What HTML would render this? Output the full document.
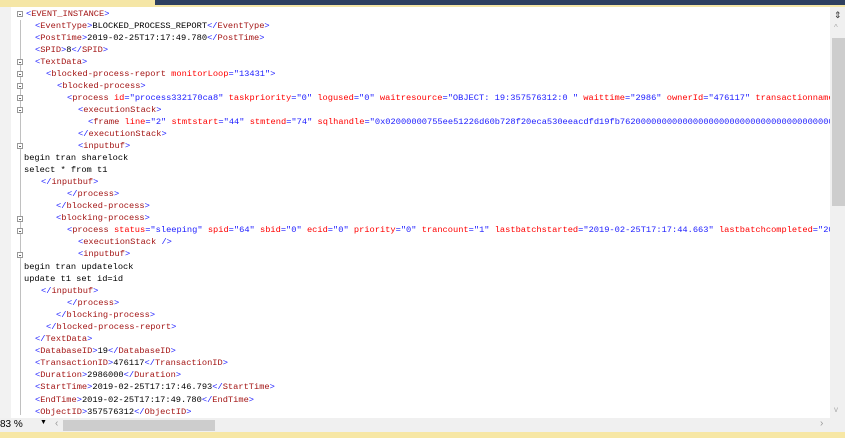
<!DOCTYPE html>
<html><head><style>
body{margin:0;width:845px;height:438px;overflow:hidden;background:#fff;position:relative;font-family:"Liberation Mono",monospace;}
#top{position:absolute;left:0;top:0;width:845px;height:7px;background:#f5e6a6;}
#nav{position:absolute;left:155px;top:0;width:690px;height:5px;background:#2e3f5f;}
#gut{position:absolute;left:0;top:7px;width:11px;height:411px;background:#f2f2f2;}
#fold{position:absolute;left:20px;top:20px;width:1px;height:395px;background:#c0c0c0;}
.l{position:absolute;font-size:8.7px;line-height:12px;white-space:pre;color:#000;}
.b{color:#2020ff}.t{color:#a31515}.a{color:#ff0000}.v{color:#2020ff}
.fm{position:absolute;left:17px;width:6px;height:6px;border:1px solid #999;background:#fff;box-sizing:border-box;}
.fm::after{content:"";position:absolute;left:1px;top:2px;width:2px;height:1px;background:#666}
#vs{position:absolute;left:830px;top:7px;width:15px;height:411px;background:#f0f0f0;}
#vt{position:absolute;left:832px;top:38px;width:13px;height:168px;background:#cdcdcd;}
#bot{position:absolute;left:0;top:418px;width:845px;height:14px;background:#f0f0f0;font-family:"Liberation Sans",sans-serif;font-size:10px;}
#ht{position:absolute;left:63px;top:420px;width:152px;height:11px;background:#cdcdcd;}
#yb{position:absolute;left:0;top:432px;width:845px;height:6px;background:#f7e7a5;}
#ed{position:absolute;left:0;top:7px;width:830px;height:411px;overflow:hidden;}
</style></head><body>
<div id="top"></div><div id="nav"></div>
<div id="gut"></div><div id="fold"></div>
<div id="vs"><div style="position:absolute;left:4px;top:3px;font-size:9px;color:#333;font-family:'Liberation Sans'">&#8661;</div><div style="position:absolute;left:4px;top:16px;font-size:8px;color:#aaa;font-family:'Liberation Sans'">^</div><div style="position:absolute;left:4px;top:398px;font-size:8px;color:#aaa;font-family:'Liberation Sans'">v</div></div>
<div id="vt"></div>
<div id="bot"><span style="position:absolute;left:0;top:1px">83 %</span><span style="position:absolute;left:40px;top:1px;font-size:7px">&#9660;</span><span style="position:absolute;left:55px;top:0;color:#999">&lsaquo;</span><span style="position:absolute;left:820px;top:0;color:#999">&rsaquo;</span></div>
<div id="ht"></div>
<div id="yb"></div>

<div class="fm" style="top:11px"></div>
<div class="fm" style="top:59px"></div>
<div class="fm" style="top:71px"></div>
<div class="fm" style="top:83px"></div>
<div class="fm" style="top:95px"></div>
<div class="fm" style="top:107px"></div>
<div class="fm" style="top:143px"></div>
<div class="fm" style="top:216px"></div>
<div class="fm" style="top:228px"></div>
<div class="fm" style="top:252px"></div>

<div id="ed"><div style="position:absolute;left:0;top:-7px;width:845px">
<div class="l" style="left:26px;top:8px"><span class="b">&lt;</span><span class="t">EVENT_INSTANCE</span><span class="b">&gt;</span></div>
<div class="l" style="left:35px;top:20px"><span class="b">&lt;</span><span class="t">EventType</span><span class="b">&gt;</span>BLOCKED_PROCESS_REPORT<span class="b">&lt;/</span><span class="t">EventType</span><span class="b">&gt;</span></div>
<div class="l" style="left:35px;top:32px"><span class="b">&lt;</span><span class="t">PostTime</span><span class="b">&gt;</span>2019-02-25T17:17:49.780<span class="b">&lt;/</span><span class="t">PostTime</span><span class="b">&gt;</span></div>
<div class="l" style="left:35px;top:44px"><span class="b">&lt;</span><span class="t">SPID</span><span class="b">&gt;</span>8<span class="b">&lt;/</span><span class="t">SPID</span><span class="b">&gt;</span></div>
<div class="l" style="left:35px;top:56px"><span class="b">&lt;</span><span class="t">TextData</span><span class="b">&gt;</span></div>
<div class="l" style="left:46px;top:68px"><span class="b">&lt;</span><span class="t">blocked-process-report</span> <span class="a">monitorLoop</span><span class="b">="</span><span class="v">13431</span><span class="b">"&gt;</span></div>
<div class="l" style="left:57px;top:80px"><span class="b">&lt;</span><span class="t">blocked-process</span><span class="b">&gt;</span></div>
<div class="l" style="left:67px;top:92px"><span class="b">&lt;</span><span class="t">process</span> <span class="a">id</span><span class="b">="</span><span class="v">process332170ca8</span><span class="b">"</span> <span class="a">taskpriority</span><span class="b">="</span><span class="v">0</span><span class="b">"</span> <span class="a">logused</span><span class="b">="</span><span class="v">0</span><span class="b">"</span> <span class="a">waitresource</span><span class="b">="</span><span class="v">OBJECT: 19:357576312:0 </span><span class="b">"</span> <span class="a">waittime</span><span class="b">="</span><span class="v">2986</span><span class="b">"</span> <span class="a">ownerId</span><span class="b">="</span><span class="v">476117</span><span class="b">"</span> <span class="a">transactionname</span></div>
<div class="l" style="left:78px;top:104px"><span class="b">&lt;</span><span class="t">executionStack</span><span class="b">&gt;</span></div>
<div class="l" style="left:88px;top:116px"><span class="b">&lt;</span><span class="t">frame</span> <span class="a">line</span><span class="b">="</span><span class="v">2</span><span class="b">"</span> <span class="a">stmtstart</span><span class="b">="</span><span class="v">44</span><span class="b">"</span> <span class="a">stmtend</span><span class="b">="</span><span class="v">74</span><span class="b">"</span> <span class="a">sqlhandle</span><span class="b">="</span><span class="v">0x02000000755ee51226d60b728f20eca530eeacdfd19fb76200000000000000000000000000000000000000000000</span></div>
<div class="l" style="left:78px;top:128px"><span class="b">&lt;/</span><span class="t">executionStack</span><span class="b">&gt;</span></div>
<div class="l" style="left:78px;top:140px"><span class="b">&lt;</span><span class="t">inputbuf</span><span class="b">&gt;</span></div>
<div class="l" style="left:24px;top:152px">begin tran sharelock</div>
<div class="l" style="left:24px;top:164px">select * from t1</div>
<div class="l" style="left:41px;top:176px"><span class="b">&lt;/</span><span class="t">inputbuf</span><span class="b">&gt;</span></div>
<div class="l" style="left:67px;top:188px"><span class="b">&lt;/</span><span class="t">process</span><span class="b">&gt;</span></div>
<div class="l" style="left:56px;top:200px"><span class="b">&lt;/</span><span class="t">blocked-process</span><span class="b">&gt;</span></div>
<div class="l" style="left:56px;top:212px"><span class="b">&lt;</span><span class="t">blocking-process</span><span class="b">&gt;</span></div>
<div class="l" style="left:67px;top:224px"><span class="b">&lt;</span><span class="t">process</span> <span class="a">status</span><span class="b">="</span><span class="v">sleeping</span><span class="b">"</span> <span class="a">spid</span><span class="b">="</span><span class="v">64</span><span class="b">"</span> <span class="a">sbid</span><span class="b">="</span><span class="v">0</span><span class="b">"</span> <span class="a">ecid</span><span class="b">="</span><span class="v">0</span><span class="b">"</span> <span class="a">priority</span><span class="b">="</span><span class="v">0</span><span class="b">"</span> <span class="a">trancount</span><span class="b">="</span><span class="v">1</span><span class="b">"</span> <span class="a">lastbatchstarted</span><span class="b">="</span><span class="v">2019-02-25T17:17:44.663</span><span class="b">"</span> <span class="a">lastbatchcompleted</span><span class="b">="</span><span class="v">2019</span></div>
<div class="l" style="left:78px;top:236px"><span class="b">&lt;</span><span class="t">executionStack</span> <span class="b">/&gt;</span></div>
<div class="l" style="left:78px;top:248px"><span class="b">&lt;</span><span class="t">inputbuf</span><span class="b">&gt;</span></div>
<div class="l" style="left:24px;top:261px">begin tran updatelock</div>
<div class="l" style="left:24px;top:273px">update t1 set id=id</div>
<div class="l" style="left:41px;top:285px"><span class="b">&lt;/</span><span class="t">inputbuf</span><span class="b">&gt;</span></div>
<div class="l" style="left:67px;top:297px"><span class="b">&lt;/</span><span class="t">process</span><span class="b">&gt;</span></div>
<div class="l" style="left:56px;top:309px"><span class="b">&lt;/</span><span class="t">blocking-process</span><span class="b">&gt;</span></div>
<div class="l" style="left:46px;top:321px"><span class="b">&lt;/</span><span class="t">blocked-process-report</span><span class="b">&gt;</span></div>
<div class="l" style="left:35px;top:333px"><span class="b">&lt;/</span><span class="t">TextData</span><span class="b">&gt;</span></div>
<div class="l" style="left:35px;top:345px"><span class="b">&lt;</span><span class="t">DatabaseID</span><span class="b">&gt;</span>19<span class="b">&lt;/</span><span class="t">DatabaseID</span><span class="b">&gt;</span></div>
<div class="l" style="left:35px;top:357px"><span class="b">&lt;</span><span class="t">TransactionID</span><span class="b">&gt;</span>476117<span class="b">&lt;/</span><span class="t">TransactionID</span><span class="b">&gt;</span></div>
<div class="l" style="left:35px;top:369px"><span class="b">&lt;</span><span class="t">Duration</span><span class="b">&gt;</span>2986000<span class="b">&lt;/</span><span class="t">Duration</span><span class="b">&gt;</span></div>
<div class="l" style="left:35px;top:381px"><span class="b">&lt;</span><span class="t">StartTime</span><span class="b">&gt;</span>2019-02-25T17:17:46.793<span class="b">&lt;/</span><span class="t">StartTime</span><span class="b">&gt;</span></div>
<div class="l" style="left:35px;top:394px"><span class="b">&lt;</span><span class="t">EndTime</span><span class="b">&gt;</span>2019-02-25T17:17:49.780<span class="b">&lt;/</span><span class="t">EndTime</span><span class="b">&gt;</span></div>
<div class="l" style="left:35px;top:406px"><span class="b">&lt;</span><span class="t">ObjectID</span><span class="b">&gt;</span>357576312<span class="b">&lt;/</span><span class="t">ObjectID</span><span class="b">&gt;</span></div>
</div></div>
</body></html>
